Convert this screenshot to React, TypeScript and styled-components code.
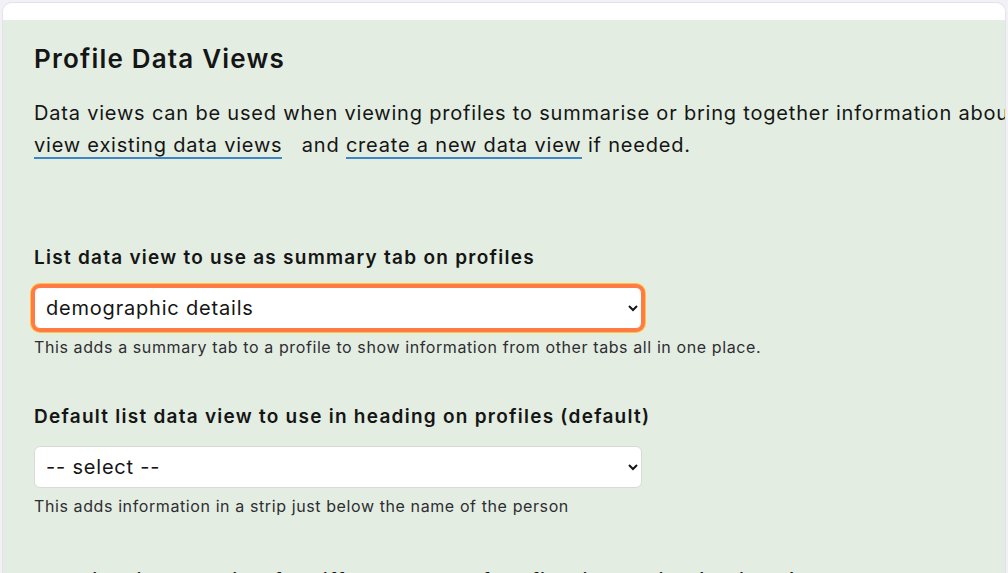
import React from "react";
import styled, { createGlobalStyle, css } from "styled-components";

const Global = createGlobalStyle`
  html, body { margin: 0; padding: 0; background: #f1f1f6; overflow: hidden; }
  body { font-family: Inter, "Noto Sans", Arial, sans-serif; color: #151515; }
  * { box-sizing: border-box; }
`;

const Frame = styled.div`
  margin: 2px 2px 0 2px;
  height: 571px;
  border-radius: 10px 10px 0 0;
  border: 1px solid #e2e2ea;
  border-bottom: none;
  overflow: hidden;
  display: flex;
  flex-direction: column;
  background: #ffffff;
`;

const TopStrip = styled.div`
  height: 17px;
  background: #ffffff;
  flex: none;
`;

const Panel = styled.main`
  flex: 1;
  background: #e3ede2;
  padding: 24px 0 0 31px;
  width: 1200px;
`;

const Title = styled.h1`
  margin: 0;
  font-size: 26px;
  line-height: 30px;
  font-weight: 600;
  letter-spacing: 1.2px;
`;

const Intro = styled.p`
  margin: 23px 0 0 0;
  font-size: 20px;
  line-height: 32px;
  font-weight: 400;
  letter-spacing: 0.8px;
  width: 1150px;
`;

const Link = styled.a`
  color: inherit;
  text-decoration: none;
  border-bottom: 2px solid #3d86c6;
`;

const Field = styled.section<{ $gap: number }>`
  margin-top: ${(p) => p.$gap}px;
  display: flex;
  flex-direction: column;
  align-items: flex-start;
`;

const Label = styled.label`
  font-size: 19px;
  line-height: 25px;
  font-weight: 600;
  letter-spacing: 1.25px;
  white-space: nowrap;
`;

const Select = styled.select<{ $focused?: boolean }>`
  margin-top: 17px;
  width: 608px;
  height: 42px;
  font-family: Inter, "Noto Sans", Arial, sans-serif;
  font-size: 20px;
  letter-spacing: 0.8px;
  color: #151515;
  background: #ffffff;
  border: 1px solid #d9d9d9;
  border-radius: 6px;
  padding: 0 8px 0 7px;
  outline: none;
  ${(p) =>
    p.$focused &&
    css`
      border-color: #ff7a45;
      box-shadow: 0 0 0 3px #ff7a45, 0 0 0 4px #ffc43d;
    `}
`;

const Help = styled.div`
  margin-top: 8px;
  font-size: 16px;
  line-height: 20px;
  letter-spacing: 0.6px;
  color: #2e2e33;
  white-space: nowrap;
`;

export default function App() {
  return (
    <>
      <Global />
      <Frame>
        <TopStrip />
        <Panel>
          <Title>Profile Data Views</Title>
          <Intro>
            Data views can be used when viewing profiles to summarise or bring together information about
            <br />
            <Link href="#">view existing data views</Link>&nbsp;&nbsp; and{" "}
            <Link href="#">create a new data view</Link> if needed.
          </Intro>

          <Field $gap={84}>
            <Label>List data view to use as summary tab on profiles</Label>
            <Select $focused defaultValue="demo">
              <option value="">-- select --</option>
              <option value="demo">demographic details</option>
            </Select>
            <Help>This adds a summary tab to a profile to show information from other tabs all in one place.</Help>
          </Field>

          <Field $gap={47}>
            <Label>Default list data view to use in heading on profiles (default)</Label>
            <Select defaultValue="">
              <option value="">-- select --</option>
              <option value="demo">demographic details</option>
            </Select>
            <Help>This adds information in a strip just below the name of the person</Help>
          </Field>

          <Field $gap={52}>
            <Label>Override list data view for different types of profiles in heading (optional)</Label>
          </Field>
        </Panel>
      </Frame>
    </>
  );
}
